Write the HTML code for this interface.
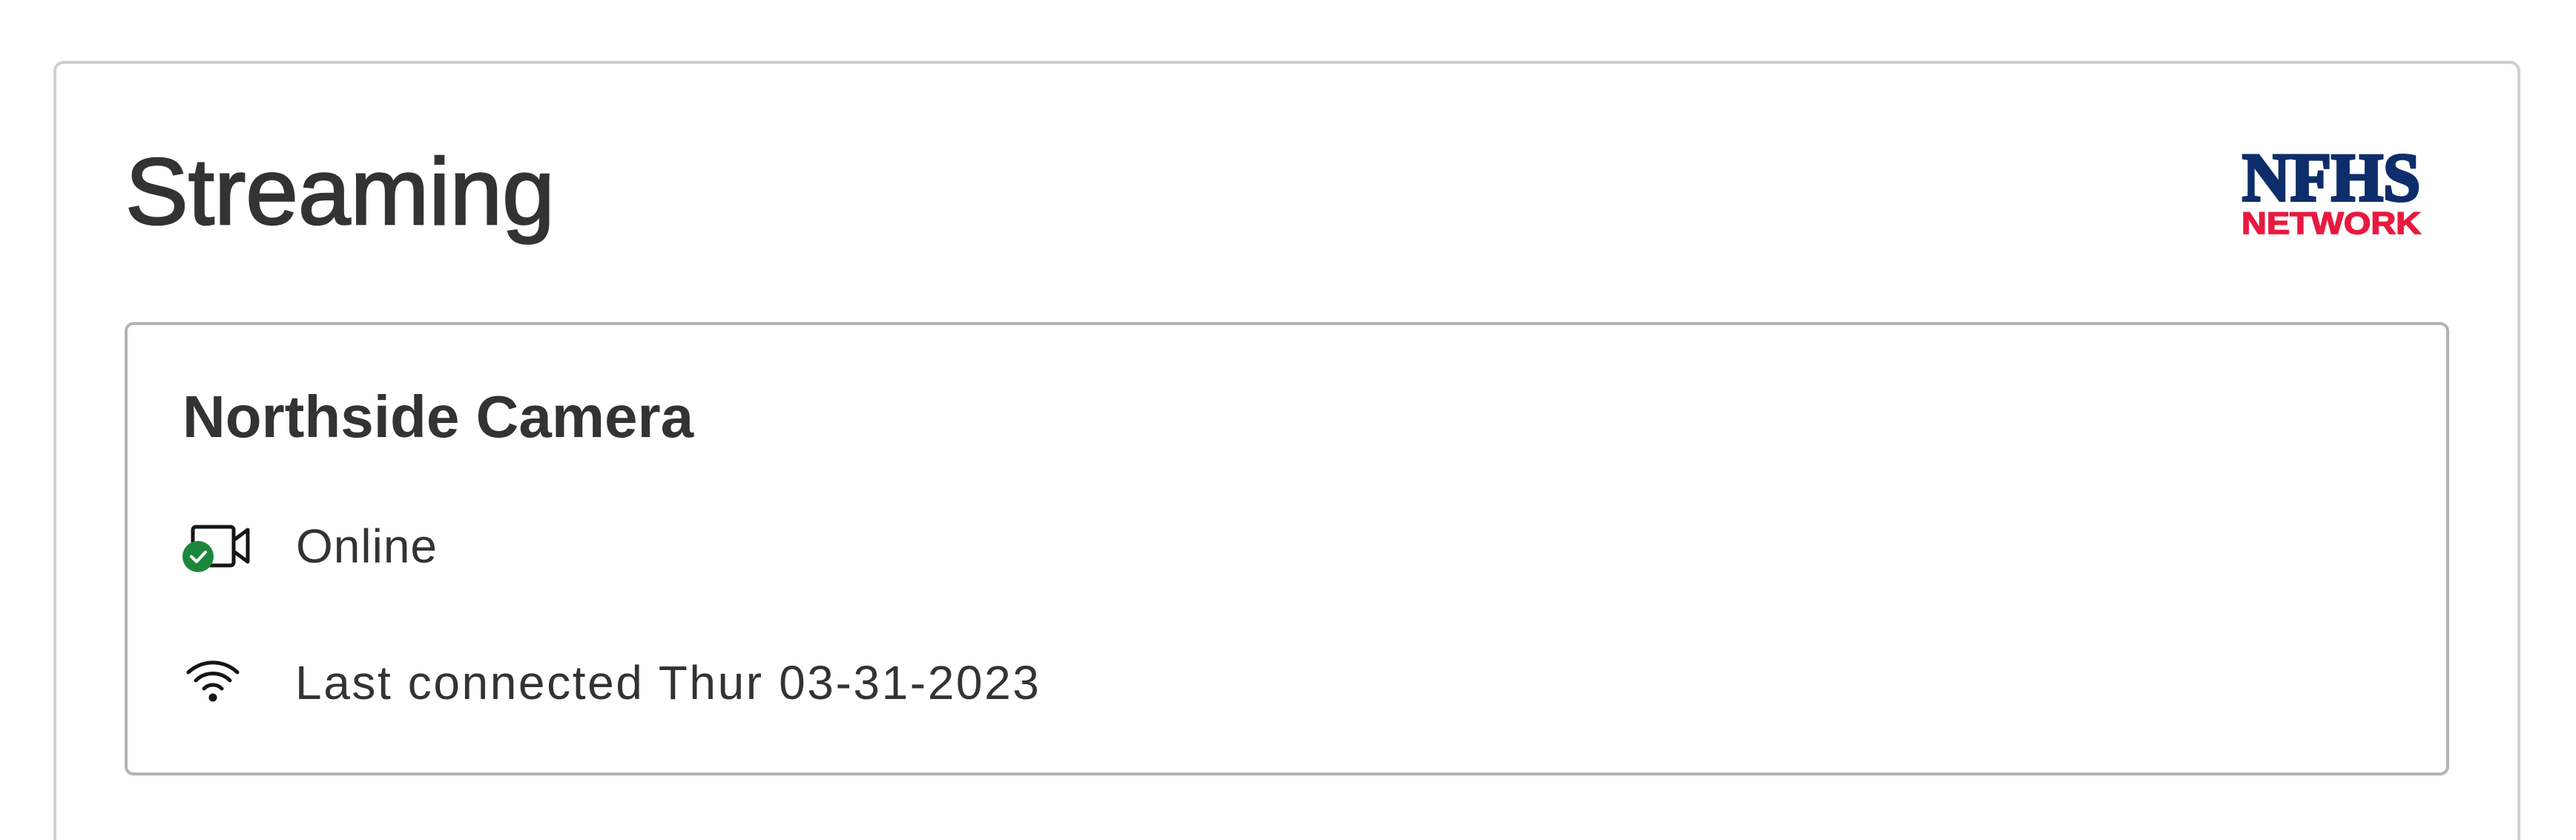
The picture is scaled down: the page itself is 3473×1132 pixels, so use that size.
<!DOCTYPE html>
<html><head><meta charset="utf-8"><style>
html,body{margin:0;padding:0;background:#fff;width:3473px;height:1132px;overflow:hidden;position:relative;font-family:"Liberation Sans",sans-serif;color:#333}
.outer{position:absolute;left:72px;top:82px;width:3326px;height:1050px;border:4px solid #cfcfcf;border-bottom:none;border-radius:14px 14px 0 0;box-sizing:border-box}
.inner{position:absolute;left:168px;top:434px;width:3134px;height:611px;border:4px solid #b3b3b3;border-radius:12px;box-sizing:border-box}
.t{position:absolute;line-height:1;white-space:nowrap}
</style></head><body>
<div class="outer"></div>
<div class="inner"></div>
<div class="t" style="left:169px;top:195px;font-size:127px;-webkit-text-stroke:2.5px #333">Streaming</div>
<svg style="position:absolute;left:3000px;top:190px" width="300" height="140" viewBox="3000 190 300 140">
<text x="3023" y="270" font-family="Liberation Serif,serif" font-weight="bold" font-size="92" fill="#0e2d6b" stroke="#0e2d6b" stroke-width="4" textLength="240" lengthAdjust="spacingAndGlyphs">NFHS</text>
<text x="3022" y="315" font-family="Liberation Sans,sans-serif" font-weight="bold" font-size="42" fill="#e8193f" stroke="#e8193f" stroke-width="1.5" textLength="242" lengthAdjust="spacingAndGlyphs">NETWORK</text>
</svg>
<div class="t" style="left:246px;top:522px;font-size:80px;font-weight:bold">Northside Camera</div>
<svg style="position:absolute;left:230px;top:690px" width="130" height="290" viewBox="230 690 130 290">
<rect x="260" y="710" width="55" height="52" rx="4" fill="none" stroke="#151515" stroke-width="5"/>
<path d="M315 728 L334 714 L334 757 L315 743" fill="none" stroke="#151515" stroke-width="5" stroke-linejoin="round"/>
<circle cx="267" cy="750" r="21" fill="#1b873b"/>
<path d="M258 750 L265 757 L277 744" fill="none" stroke="#fff" stroke-width="4" stroke-linecap="round" stroke-linejoin="round"/>
<path d="M254 906 A48 48 0 0 1 320 906" fill="none" stroke="#151515" stroke-width="5" stroke-linecap="round"/>
<path d="M264 917 A33 33 0 0 1 310 917" fill="none" stroke="#151515" stroke-width="5" stroke-linecap="round"/>
<path d="M275 928 A17 17 0 0 1 299 928" fill="none" stroke="#151515" stroke-width="5" stroke-linecap="round"/>
<circle cx="287" cy="940" r="5.5" fill="#151515"/>
</svg>
<div class="t" style="left:399px;top:704px;font-size:64px;letter-spacing:1px">Online</div>
<div class="t" style="left:398px;top:888px;font-size:64px;letter-spacing:2.6px">Last connected Thur 03-31-2023</div>
</body></html>
